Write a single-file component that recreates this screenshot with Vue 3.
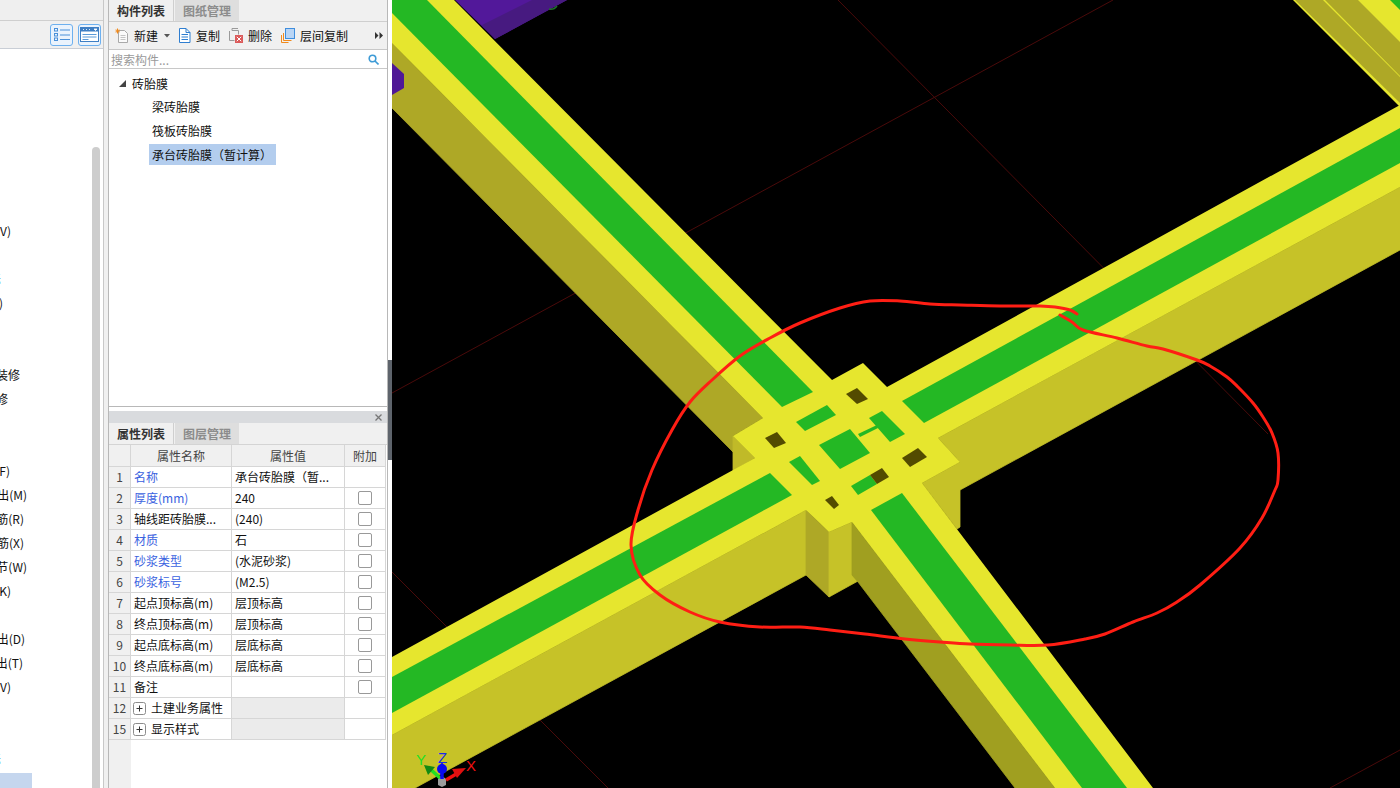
<script setup>
const leftRows = [
  { y: 7, text: '视图(V)', end: 11 },
  { y: 9, text: '标', end: 1, blue: true },
  { y: 10, text: '(Y)', end: 3 },
  { y: 13, text: '装修', end: 20 },
  { y: 14, text: '装修', end: 8 },
  { y: 17, text: '(F)', end: 10 },
  { y: 18, text: '挑出(M)', end: 27 },
  { y: 19, text: '钢筋(R)', end: 24 },
  { y: 20, text: '钢筋(X)', end: 24 },
  { y: 21, text: '细节(W)', end: 27 },
  { y: 22, text: '(K)', end: 11 },
  { y: 24, text: '挑出(D)', end: 25 },
  { y: 25, text: '挑出(T)', end: 23 },
  { y: 26, text: '(V)', end: 11 },
  { y: 29, text: '标', end: 1, blue: true }
]
const rowsByIndex = Array.from({ length: 30 }, (_, i) => leftRows.find(r => r.y === i) || null)

const props = [
  { n: 1, name: '名称', value: '承台砖胎膜（暂...', link: true, noCheck: true },
  { n: 2, name: '厚度(mm)', value: '240', link: true },
  { n: 3, name: '轴线距砖胎膜...', value: '(240)' },
  { n: 4, name: '材质', value: '石', link: true },
  { n: 5, name: '砂浆类型', value: '(水泥砂浆)', link: true },
  { n: 6, name: '砂浆标号', value: '(M2.5)', link: true },
  { n: 7, name: '起点顶标高(m)', value: '层顶标高' },
  { n: 8, name: '终点顶标高(m)', value: '层顶标高' },
  { n: 9, name: '起点底标高(m)', value: '层底标高' },
  { n: 10, name: '终点底标高(m)', value: '层底标高' },
  { n: 11, name: '备注', value: '' },
  { n: 12, name: '土建业务属性', value: '', group: true },
  { n: 15, name: '显示样式', value: '', group: true }
]

const yellow = '#e6e62e'
const green = '#24b824'
const hole = '#534b00'

const faces = [
  { c: '#aea826', p: '392,43 763,418 733,436 733,452 392,108' },
  { c: '#c0ba28', p: '733,436 755,458 733,471' },
  { c: '#c6c228', p: '392,735 806,510 806,575 415,788 392,788' },
  { c: '#c6c228', p: '938,438 1400,187 1400,250 960,490 960,527 957,529 922,483 960,462' },
  { c: '#aea826', p: '806,510 829,532 829,597 806,575' },
  { c: '#c6c228', p: '829,532 852,522 852,575 858,581 829,597' },
  { c: '#a09f20', p: '852,522 1055,788 1015,788 858,582 852,575' }
]
const tops = [
  '392,0 454,0 832,380 863,363 887,387 1400,105 1400,187 938,438 960,462 922,483 1153,788 1055,788 852,522 829,532 806,510 392,735 392,657 755,458 733,436 763,418 392,43'
]
const greens = [
  '392,0 427,0 813,392 782,407 392,13',
  '902,401 1400,128 1400,163 924,423',
  '392,677 770,473 792,495 392,713',
  '902,493 1127,788 1082,788 871,510',
  '796,422 827,405 836,415 805,431',
  '869,418 882,411 905,434 890,442',
  '819,445 850,429 870,453 840,469',
  '858,434 877,425 878,428 860,437',
  '789,462 800,456 820,481 812,485',
  '851,486 870,475 877,484 858,495'
]
const holes = [
  '846,394 857,388 868,399 857,404',
  '765,438 777,432 786,443 774,448',
  '902,458 918,448 927,457 910,467',
  '870,475 882,468 889,477 877,484',
  '825,500 832,496 839,505 834,509'
]
const gridLines = [
  [838, 0, 1268, 434],
  [392, 393, 1113, 0],
  [392, 572, 608, 788],
  [1330, 788, 1400, 750]
]
const curvePts = [
  [1077, 314], [1070, 310], [1055, 307], [1040, 306], [1000, 306], [960, 305], [930, 304], [900, 301], [870, 301],
  [840, 308], [800, 323], [770, 338], [740, 356], [712, 380], [690, 402], [672, 430], [652, 470], [638, 510],
  [631, 545], [640, 575], [660, 595], [690, 612], [720, 622], [760, 627], [800, 627], [830, 630], [865, 634],
  [905, 639], [940, 642], [970, 644], [1010, 645], [1048, 645], [1085, 639], [1105, 634], [1133, 622], [1157, 613],
  [1177, 602], [1200, 585], [1240, 548], [1262, 518], [1275, 490], [1278, 480], [1278, 453], [1272, 433], [1263, 417],
  [1253, 403], [1238, 387], [1227, 377], [1210, 366], [1197, 360], [1163, 349], [1147, 346], [1117, 338], [1083, 330],
  [1072, 322], [1060, 315]
]
const curve = curvePts.reduce((d, p, i, a) => {
  if (i === 0) return `M${p[0]} ${p[1]}`
  const p0 = a[i - 2] || a[i - 1]
  const p1 = a[i - 1]
  const p3 = a[i + 1] || p
  const c1x = p1[0] + (p[0] - p0[0]) / 6
  const c1y = p1[1] + (p[1] - p0[1]) / 6
  const c2x = p[0] - (p3[0] - p1[0]) / 6
  const c2y = p[1] - (p3[1] - p1[1]) / 6
  return `${d}C${c1x.toFixed(1)} ${c1y.toFixed(1)} ${c2x.toFixed(1)} ${c2y.toFixed(1)} ${p[0]} ${p[1]}`
}, '')
</script>

<template>
  <div class="page">
    <aside class="left">
      <div class="left-top"></div>
      <div class="left-tools">
        <button class="view-btn">
          <svg width="18" height="15" viewBox="0 0 18 15" fill="none" stroke="#4a90d9">
            <rect x="1.5" y="1.5" width="3" height="2.5" />
            <rect x="1.5" y="6.5" width="3" height="2.5" />
            <rect x="1.5" y="11" width="3" height="2.5" />
            <path d="M7 3h10M7 8h10M7 12.5h10" />
          </svg>
        </button>
        <button class="view-btn">
          <svg width="19" height="15" viewBox="0 0 19 15">
            <rect x="0.5" y="0.5" width="18" height="14" fill="#fff" stroke="#3f7fc4" />
            <rect x="0.5" y="0.5" width="18" height="4" fill="#3f7fc4" />
            <path d="M3 2.500h1M6 2.500h1M9 2.500h1M14 2h3l-1.500 1.500z" stroke="#fff" fill="#fff" stroke-width="0.8" />
            <path d="M2.500 7.500h14M2.500 10h14M2.500 12.500h6" stroke="#5b9ad8" />
          </svg>
        </button>
      </div>
      <div class="left-body">
        <div class="left-list">
          <div v-for="(r, i) in rowsByIndex" :key="i" class="left-row">
            <div v-if="r" class="left-clip" :class="{ blue: r.blue }" :style="{ width: r.end + 'px' }">{{ r.text }}</div>
          </div>
          <div class="left-selected"></div>
        </div>
        <div class="scroll"></div>
      </div>
    </aside>
    <div class="split"></div>

    <main class="middle">
      <section class="panel-top">
        <div class="tabs">
          <div class="tab on">构件列表</div>
          <div class="tab">图纸管理</div>
        </div>
        <div class="toolbar">
          <span class="tool first">
            <svg width="14" height="15" viewBox="0 0 14 15" fill="none">
              <path d="M3.500 2.500h6l3 3v9h-9z" fill="#fafafa" stroke="#a9a9a9" />
              <path d="M5.500 7.500h5M5.500 9.500h5M5.500 11.500h5" stroke="#c4c4c4" />
              <path d="M2.500 0.500v5M0.500 3h4.500M1 1.500l3 3M4 1.500l-3 3" stroke="#f08a1d" />
            </svg>
            新建
          </span>
          <svg class="caret" width="6" height="4" viewBox="0 0 6 4"><path d="M0 0h6L3 3.500z" fill="#555" /></svg>
          <span class="tool t2">
            <svg width="13" height="15" viewBox="0 0 13 15" fill="none" stroke="#2f7ed0">
              <path d="M1.500 0.500h6.500l4 4v10h-10.500z" fill="#fff" />
              <path d="M8 0.500v4h4M3.500 6.500h6.500M3.500 9h6.500M3.500 11.500h6.500" />
            </svg>
            复制
          </span>
          <span class="tool t3">
            <svg width="14" height="15" viewBox="0 0 14 15" fill="none">
              <path d="M3 2.500v-2h6M0.500 3v9.500h5M3 2.500h6.500v4" stroke="#9a9a9a" />
              <rect x="6" y="7" width="8" height="8" fill="#db5a5a" />
              <path d="M7.800 8.800l4.400 4.400M12.200 8.800l-4.400 4.400" stroke="#fff" />
            </svg>
            删除
          </span>
          <span class="tool t3">
            <svg width="14" height="15" viewBox="0 0 14 15" fill="none">
              <path d="M2.500 5v7.500h8M0.500 7v7.500h7" stroke="#f08a1d" />
              <rect x="4.500" y="0.500" width="9" height="10" fill="#b9d5f5" stroke="#3f8ede" />
            </svg>
            层间复制
          </span>
          <svg class="more" width="8" height="7" viewBox="0 0 8 7"><path d="M0 0l3.500 3.500L0 7zM4.500 0L8 3.500 4.500 7z" fill="#333" /></svg>
        </div>
        <div class="search">
          <span>搜索构件...</span>
          <svg width="11" height="11" viewBox="0 0 11 11" fill="none" stroke="#3e9bd6" stroke-width="1.600">
            <circle cx="4.500" cy="4.500" r="3.300" />
            <path d="M7 7l3.500 3.500" />
          </svg>
        </div>
        <div class="tree">
          <div class="tree-root">
            <svg width="7" height="7" viewBox="0 0 7 7"><path d="M7 0v7H0z" fill="#444" /></svg>
            <span>砖胎膜</span>
          </div>
          <div class="tree-item"><span>梁砖胎膜</span></div>
          <div class="tree-item"><span>筏板砖胎膜</span></div>
          <div class="tree-item"><span class="sel">承台砖胎膜（暂计算）</span></div>
        </div>
      </section>

      <div class="panel-gap"></div>

      <section class="panel-bottom">
        <div class="close-strip">
          <svg width="7" height="7" viewBox="0 0 7 7"><path d="M0.500 0.500l6 6M6.500 0.500l-6 6" stroke="#777" stroke-width="1.300" /></svg>
        </div>
        <div class="tabs tabs-b">
          <div class="tab on">属性列表</div>
          <div class="tab">图层管理</div>
        </div>
        <div class="grid head">
          <div class="c num"></div>
          <div class="c ctr">属性名称</div>
          <div class="c ctr">属性值</div>
          <div class="c ctr">附加</div>
        </div>
        <div v-for="p in props" :key="p.n" class="grid">
          <div class="c num">{{ p.n }}</div>
          <div class="c name" :class="{ link: p.link }">
            <svg v-if="p.group" class="plus" width="13" height="13" viewBox="0 0 13 13" fill="none">
              <rect x="0.500" y="0.500" width="12" height="12" rx="2" stroke="#8c8c8c" />
              <path d="M3.500 6.500h6M6.500 3.500v6" stroke="#333" />
            </svg>
            {{ p.name }}
          </div>
          <div class="c val" :class="{ shade: p.group }">{{ p.value }}</div>
          <div class="c ctr">
            <span v-if="!p.noCheck && !p.group" class="check"></span>
          </div>
        </div>
        <div class="grid-fill"><div class="fill-num"></div></div>
      </section>
    </main>

    <div class="gutter"><div class="gutter-thumb"></div></div>

    <div class="canvas">
      <svg class="scene" viewBox="392 0 1008 788" width="1008" height="788">
        <rect x="392" y="0" width="1008" height="788" fill="#000" />
        <line v-for="(l, i) in gridLines" :key="'g' + i" :x1="l[0]" :y1="l[1]" :x2="l[2]" :y2="l[3]" stroke="#4a0a0a" stroke-width="1" />

        <polygon points="455,0 567,0 495,39" fill="#52189a" />
        <polygon points="482,25 532,0 567,0 495,39" fill="#471a80" />
        <path d="M549 9q5 1 8-3" stroke="#1e6e2a" stroke-width="1.500" fill="none" />

        <polygon points="1293,0 1400,107 1400,0" fill="#e6e62e" />
        <polygon points="1295,0 1323,0 1400,77 1400,103" fill="#aea826" />
        <polygon points="1325,0 1358,0 1400,42 1400,76" fill="#aea826" />
        <polygon points="1390,0 1400,0 1400,10" :fill="green" />

        <polygon v-for="(f, i) in faces" :key="'f' + i" :points="f.p" :fill="f.c" :stroke="f.c" stroke-width="0.8" />
        <polygon points="392,63 404,74 404,88 392,95" fill="#4f1896" />
        <polygon v-for="(p, i) in tops" :key="'t' + i" :points="p" :fill="yellow" />
        <polygon v-for="(p, i) in greens" :key="'gr' + i" :points="p" :fill="green" />
        <polygon v-for="(p, i) in holes" :key="'h' + i" :points="p" :fill="hole" />

        <path :d="curve" fill="none" stroke="#ff1e14" stroke-width="3" stroke-linejoin="round" stroke-linecap="round" />

        <g>
          <polygon points="438,779 442,776 446,779 446,785 442,787 438,785" fill="#9c9c9c" />
          <path d="M440 778L428 767" stroke="#22e022" stroke-width="3.500" />
          <polygon points="424,765 435,767 428,775" fill="#128a12" />
          <path d="M446 780L458 773" stroke="#f01010" stroke-width="3.500" />
          <polygon points="466,768 452,769 457,778" fill="#e01010" />
          <path d="M442 779V768" stroke="#0a0af0" stroke-width="3.500" />
          <circle cx="442" cy="769" r="5" fill="#0a0af0" />
          <polygon points="442,762 438,769 446,769" fill="#0a0af0" />
          <text class="axis" x="416" y="765" fill="#22e022">Y</text>
          <text class="axis" x="438" y="763" fill="#1a2ae8">Z</text>
          <text class="axis" x="466" y="771" fill="#f01010">X</text>
        </g>
      </svg>
    </div>
  </div>
</template>

<style scoped>
.page {
  display: flex;
  width: 1400px;
  height: 788px;
  overflow: hidden;
  background: #fff;
  font-family: "Noto Sans CJK SC", "Noto Sans", sans-serif;
  font-size: 12px;
  color: #111;
}

.left {
  width: 103px;
  flex: none;
  display: flex;
  flex-direction: column;
}
.left-top {
  height: 20px;
  background: #efefef;
  border-bottom: 1px solid #cfcfcf;
  flex: none;
}
.left-tools {
  height: 27px;
  flex: none;
  display: flex;
  justify-content: flex-end;
  align-items: center;
  gap: 5px;
  padding-right: 2px;
  background: #f0f0f0;
  border-bottom: 1px solid #c9ced6;
}
.view-btn {
  width: 23px;
  height: 22px;
  padding: 0;
  display: flex;
  align-items: center;
  justify-content: center;
  background: #eaf3fd;
  border: 1px solid #6db0ef;
  border-radius: 3px;
}
.left-body {
  flex: 1;
  display: flex;
  min-height: 0;
  overflow: hidden;
}
.left-list {
  width: 92px;
  flex: none;
  padding-top: 2px;
  overflow: hidden;
}
.left-row {
  height: 24px;
  line-height: 24px;
}
.left-clip {
  display: flex;
  justify-content: flex-end;
  overflow: hidden;
  white-space: nowrap;
}
.left-clip.blue {
  color: #4fb4f0;
}
.left-selected {
  width: 32px;
  height: 16px;
  margin-top: 2px;
  background: #c5d6ee;
}
.scroll {
  width: 8px;
  flex: none;
  margin-top: 98px;
  background: #cdcdcd;
  border-radius: 4px 4px 0 0;
}

.split {
  width: 5px;
  flex: none;
  box-sizing: border-box;
  background: #f0f0f0;
  border-left: 1px solid #c8c8c8;
}

.middle {
  width: 280px;
  flex: none;
  box-sizing: border-box;
  display: flex;
  flex-direction: column;
  border-left: 1px solid #b8b8b8;
  border-right: 1px solid #b8b8b8;
}
.panel-top {
  height: 406px;
  flex: none;
  display: flex;
  flex-direction: column;
  border-bottom: 1px solid #b8b8b8;
}
.panel-gap {
  height: 4px;
  flex: none;
  background: #fff;
}
.panel-bottom {
  flex: 1;
  min-height: 0;
  display: flex;
  flex-direction: column;
}
.tabs {
  height: 21px;
  flex: none;
  display: flex;
  background: #f0f0f0;
  border-bottom: 1px solid #cfcfcf;
}
.tabs-b {
  border-bottom: 1px solid #d4d4d4;
}
.tab {
  width: 64px;
  margin-right: 1px;
  text-align: center;
  line-height: 22px;
  font-weight: 700;
  color: #8c8c8c;
  background: #dedede;
}
.tab.on {
  color: #333;
  background: #f0f0f0;
  border-right: 1px solid #cfcfcf;
}
.toolbar {
  height: 27px;
  flex: none;
  display: flex;
  align-items: center;
  padding: 0 4px 0 6px;
  background: #f0f0f0;
  border-bottom: 1px solid #c8c8c8;
}
.tool {
  display: flex;
  align-items: center;
  gap: 5px;
  white-space: nowrap;
}
.caret {
  margin-left: 6px;
}
.t2 {
  margin-left: 8px;
}
.t3 {
  margin-left: 9px;
}
.more {
  margin-left: auto;
}
.search {
  height: 18px;
  flex: none;
  display: flex;
  align-items: center;
  justify-content: space-between;
  padding: 0 8px 0 2px;
  color: #9a9a9a;
  border-bottom: 1px solid #c8c8c8;
}
.tree {
  flex: 1;
  padding-top: 2px;
}
.tree-root {
  display: flex;
  align-items: center;
  gap: 6px;
  height: 24px;
  padding-left: 10px;
}
.tree-item {
  height: 24px;
  line-height: 24px;
  padding-left: 43px;
}
.tree-item span {
  display: inline-block;
  line-height: 21px;
  height: 21px;
}
.sel {
  background: #b3cdee;
  width: 127px;
  margin-left: -3px;
  padding-left: 3px;
  box-sizing: border-box;
  white-space: nowrap;
}
.close-strip {
  height: 12px;
  flex: none;
  display: flex;
  align-items: center;
  justify-content: flex-end;
  padding-right: 5px;
  background: #d9dbde;
}
.grid {
  display: grid;
  grid-template-columns: 22px 101px 113px 41px;
  height: 21px;
  flex: none;
}
.grid.head {
  height: 22px;
}
.head .c {
  height: 22px;
  padding-top: 1px;
  background: #f0f0f0;
  color: #444;
}
.c {
  box-sizing: border-box;
  height: 21px;
  line-height: 20px;
  border-right: 1px solid #d6d6d6;
  border-bottom: 1px solid #d6d6d6;
  white-space: nowrap;
  overflow: hidden;
}
.num {
  background: #f0f0f0;
  text-align: center;
  color: #444;
}
.ctr {
  display: flex;
  align-items: center;
  justify-content: center;
}
.name {
  padding-left: 3px;
  display: flex;
  align-items: center;
}
.link {
  color: #3a62e0;
}
.val {
  padding-left: 3px;
}
.shade {
  background: #ebebeb;
}
.plus {
  margin-right: 5px;
  margin-left: -1px;
  flex: none;
}
.check {
  width: 14px;
  height: 14px;
  box-sizing: border-box;
  border: 1px solid #999;
  border-radius: 2px;
  background: #fff;
}
.grid-fill {
  flex: 1;
}
.fill-num {
  width: 22px;
  height: 100%;
  background: #f0f0f0;
}

.gutter {
  position: relative;
  width: 4px;
  flex: none;
  background: #fff;
}
.gutter-thumb {
  position: absolute;
  left: 0;
  top: 360px;
  width: 4px;
  height: 100px;
  background: #5e646c;
}

.canvas {
  flex: 1;
  min-width: 0;
  background: #000;
}
.scene {
  display: block;
}
.axis {
  font-family: "Liberation Sans", sans-serif;
  font-size: 15px;
}
</style>
